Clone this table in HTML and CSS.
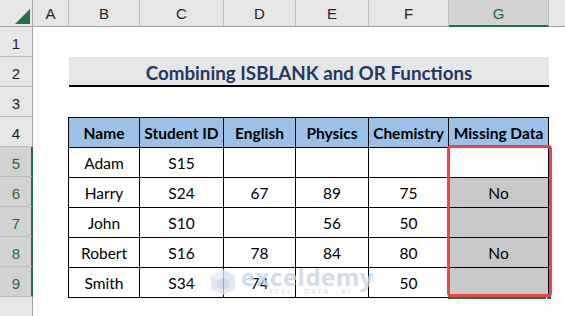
FILE: index.html
```html
<!DOCTYPE html>
<html>
<head>
<meta charset="utf-8">
<link rel="stylesheet" href="styles.css">
</head>
<body>
<div class="sheet">
  <div class="ch corner"><span class="tri"></span></div>
  <div class="ch">A</div>
  <div class="ch">B</div>
  <div class="ch">C</div>
  <div class="ch">D</div>
  <div class="ch">E</div>
  <div class="ch">F</div>
  <div class="ch sel">G</div>
  <div class="ch fill"></div>

  <div class="rh r1">1</div>
  <div class="rh r2">2</div>
  <div class="rh r3">3</div>
  <div class="rh r4">4</div>
  <div class="rh r5 sel">5</div>
  <div class="rh r6 sel">6</div>
  <div class="rh r7 sel">7</div>
  <div class="rh r8 sel">8</div>
  <div class="rh r9 sel">9</div>
  <div class="rh r10"></div>

  <div class="title">Combining ISBLANK and OR Functions</div>

  <div class="tbl">
    <div class="th">Name</div><div class="th">Student ID</div><div class="th">English</div><div class="th">Physics</div><div class="th">Chemistry</div><div class="th">Missing Data</div>
    <div class="td">Adam</div><div class="td">S15</div><div class="td"></div><div class="td"></div><div class="td"></div><div class="td"></div>
    <div class="td">Harry</div><div class="td">S24</div><div class="td">67</div><div class="td">89</div><div class="td">75</div><div class="td grey">No</div>
    <div class="td">John</div><div class="td">S10</div><div class="td"></div><div class="td">56</div><div class="td">50</div><div class="td grey"></div>
    <div class="td">Robert</div><div class="td">S16</div><div class="td">78</div><div class="td">84</div><div class="td">80</div><div class="td grey">No</div>
    <div class="td">Smith</div><div class="td">S34</div><div class="td">74</div><div class="td"></div><div class="td">50</div><div class="td grey"></div>
  </div>

  <div class="selbar"><span class="handle"></span></div>
  <div class="redbox"></div>

  <div class="wm">
    <svg class="wm-icon" width="26" height="28" viewBox="0 0 26 28">
      <path d="M13 1 L25 8 L25 21 L13 27 L1 21 L1 8 Z" fill="#dbe3ef"/>
      <path d="M13 9 L19 12.5 L19 19 L13 22 L7 19 L7 12.5 Z" fill="#c7d3e6"/>
      <path d="M13 1 L13 9 L7 12.5 L1 8 Z" fill="#e8edf5"/>
    </svg>
    <div class="wm-text">
      <div class="wm-name">exceldemy</div>
      <div class="wm-sub">EXCEL · DATA · BI</div>
    </div>
  </div>
</div>
</body>
</html>
```

FILE: styles.css
```css
* { box-sizing: border-box; }
html, body { margin: 0; padding: 0; background: #fff; }
body { width: 565px; height: 316px; overflow: hidden; font-family: Lato, "Open Sans", sans-serif; }

.sheet {
  position: relative;
  display: grid;
  grid-template-columns: 33px 36px 71px 84px 72px 73px 80px 100px 16px;
  grid-template-rows: 27px repeat(10, 30px);
  width: 565px;
  height: 316px;
  background: #fff;
}

.ch {
  background: #e6e6e6;
  border-right: 1px solid #bdbdbd;
  border-bottom: 1px solid #a6a6a6;
  display: flex;
  align-items: center;
  justify-content: center;
  font-family: "Liberation Sans", Arial, sans-serif;
  font-size: 15px;
  color: #222;
  padding-top: 1px;
}
.ch.corner { position: relative; border-right: 1px solid #a6a6a6; }
.ch.fill { border-right: none; }
.ch.sel { background: #d2d2d2; color: #1e6b41; border-bottom: 2px solid #217346; }
.tri {
  position: absolute;
  left: 15px; top: 9px;
  width: 0; height: 0;
  border-left: 15px solid transparent;
  border-bottom: 15px solid #217346;
}

.rh {
  grid-column: 1;
  background: #e6e6e6;
  border-right: 1px solid #a6a6a6;
  border-bottom: 1px solid #bdbdbd;
  display: flex;
  align-items: center;
  justify-content: center;
  font-family: "Liberation Sans", Arial, sans-serif;
  font-size: 15px;
  color: #222;
  padding-top: 3px;
}
.rh.sel { background: #d2d2d2; color: #1e6b41; border-right: 2px solid #217346; padding-left: 1px; }
.r1 { grid-row: 2; } .r2 { grid-row: 3; } .r3 { grid-row: 4; } .r4 { grid-row: 5; }
.r5 { grid-row: 6; } .r6 { grid-row: 7; } .r7 { grid-row: 8; } .r8 { grid-row: 9; }
.r9 { grid-row: 10; } .r10 { grid-row: 11; border-bottom: none; }

.title {
  grid-column: 3 / 9;
  grid-row: 3;
  background: #e7e6e6;
  border-bottom: 2px solid #000;
  display: flex;
  align-items: center;
  justify-content: center;
  font-weight: 700;
  font-size: 18.8px;
  color: #1f3864;
  padding-top: 2px;
}

.tbl {
  grid-column: 3 / 9;
  grid-row: 5 / 11;
  display: grid;
  grid-template-columns: 70px 83px 71px 72px 79px 99px;
  grid-template-rows: repeat(6, 29px);
  gap: 1px;
  padding: 1px;
  background: #000;
  width: 481px;
  height: 181px;
  margin-left: -1px;
}
.th, .td {
  display: flex;
  align-items: center;
  justify-content: center;
  font-size: 15.5px;
  color: #000;
  background: #fff;
  padding-top: 1px;
}
.th { background: #9bc2e6; font-weight: 700; }
.td.grey { background: #c8c8c8; }

.selbar {
  position: absolute;
  left: 448px; top: 296px;
  width: 102px; height: 3px;
  background: #217346;
}
.handle {
  position: absolute;
  right: -2px; top: -2px;
  width: 6px; height: 6px;
  background: #217346;
  border: 1px solid #fff;
}
.redbox {
  position: absolute;
  left: 447px; top: 145px;
  width: 105px; height: 152px;
  border: 3px solid #ec4545;
  border-radius: 4px;
}

.wm {
  position: absolute;
  left: 210px; top: 268px;
  display: flex;
  align-items: center;
  gap: 5px;
  opacity: 0.8;
  pointer-events: none;
}
.wm-text { display: flex; flex-direction: column; align-items: center; line-height: 1; }
.wm-name {
  font-family: "Open Sans", sans-serif;
  font-weight: 700;
  font-size: 24px;
  color: #c6d4ea;
  letter-spacing: 0.5px;
  margin-top: -4px;
}
.wm-sub {
  font-family: "Open Sans", sans-serif;
  font-size: 7px;
  color: #d0d0d0;
  letter-spacing: 2px;
  margin-top: -1px;
}
```
